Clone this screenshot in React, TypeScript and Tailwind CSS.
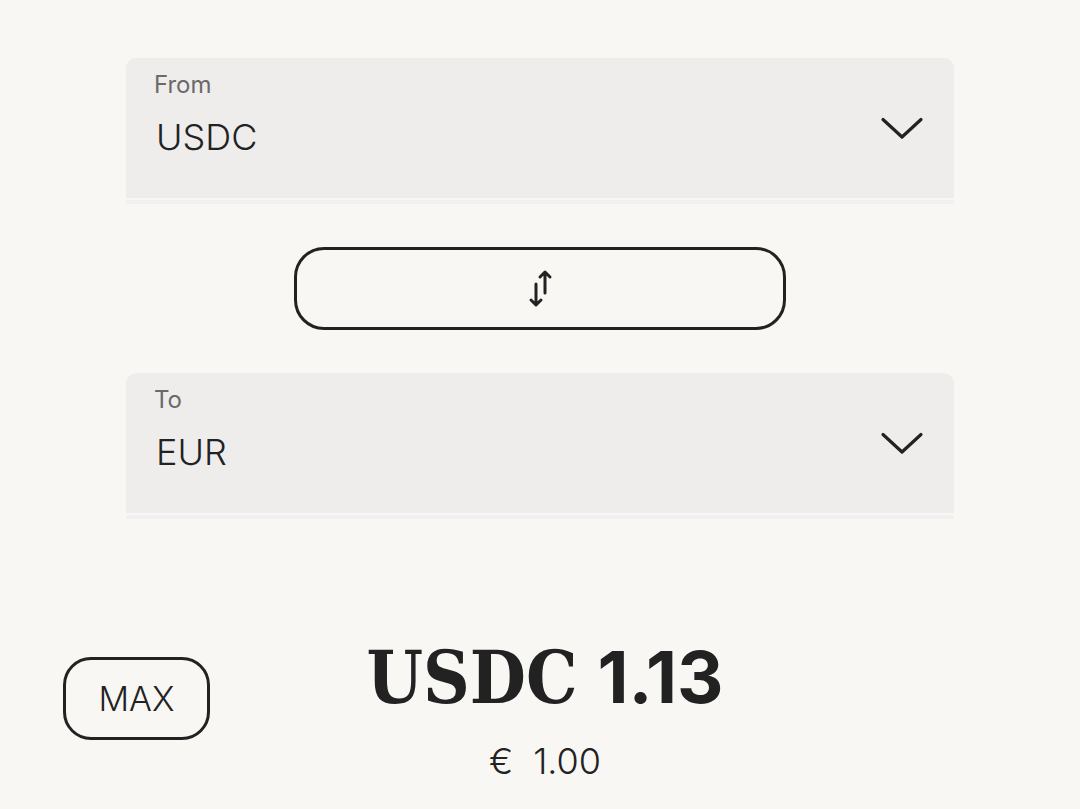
function Chevron() {
  return (
    <svg width="44" height="26" viewBox="0 0 44 26" fill="none" className="shrink-0">
      <path d="M3 4.5 L22 22 L41 4.5" stroke="#222" strokeWidth="3.2" strokeLinecap="round" strokeLinejoin="round" />
    </svg>
  );
}

function SwapIcon() {
  return (
    <svg width="26" height="42" viewBox="0 0 26 42" fill="none">
      {/* down arrow */}
      <path d="M9 16 V37 M4 32 L9 37 L14 32" stroke="#222" strokeWidth="3" strokeLinecap="round" strokeLinejoin="round" />
      {/* up arrow */}
      <path d="M18 25 V4 M13 9 L18 4 L23 9" stroke="#222" strokeWidth="3" strokeLinecap="round" strokeLinejoin="round" />
    </svg>
  );
}

function CurrencySelect({ label, value }: { label: string; value: string }) {
  return (
    <div>
      <div className="flex h-[140px] items-center justify-between rounded-t-[10px] bg-[#eeedeb] pl-[28px] pr-[30px]">
        <div className="flex flex-col self-stretch pt-[12px]">
          <span className="text-[24px] leading-[29px] text-[#6a6a6a]">{label}</span>
          <span className="mt-[16px] pl-[2px] text-[36px] font-light leading-[44px] text-[#222]">{value}</span>
        </div>
        <Chevron />
      </div>
      <div className="mt-[2px] h-[4px] bg-[#f0f0f2]" />
    </div>
  );
}

export default function App() {
  return (
    <div
      className="min-h-[809px] w-full bg-[#f8f7f4] text-[#222]"
      style={{ fontFamily: 'Inter, "Liberation Sans", sans-serif' }}
    >
      <div className="mx-auto flex w-[828px] flex-col pt-[58px]">
        <CurrencySelect label="From" value="USDC" />

        <div className="mt-[43px] flex justify-center">
          <button
            type="button"
            className="flex h-[83px] w-[492px] items-center justify-center rounded-[30px] border-[3px] border-[#222] bg-transparent"
            aria-label="Swap currencies"
          >
            <SwapIcon />
          </button>
        </div>

        <div className="mt-[43px]">
          <CurrencySelect label="To" value="EUR" />
        </div>
      </div>

      <div className="mt-[138px] flex items-start px-[63px]">
        <button
          type="button"
          className="flex h-[83px] w-[147px] shrink-0 items-center justify-center rounded-[28px] border-[3px] border-[#222] text-[34px] font-light text-[#222]"
        >
          MAX
        </button>
        <div className="-mt-[25px] flex flex-1 flex-col items-center pl-[10px]">
          <div className="flex items-baseline gap-[20px] leading-[90px]">
            <span
              className="text-[72px] font-bold"
              style={{ fontFamily: '"DejaVu Serif Condensed", "DejaVu Serif", serif', fontStretch: 'condensed' }}
            >
              USDC
            </span>
            <span className="text-[72px] font-bold">1.13</span>
          </div>
          <div className="mt-[16px] flex items-baseline gap-[20px] text-[36px] font-light leading-[44px]">
            <span>€</span>
            <span>1.00</span>
          </div>
        </div>
        <div className="w-[147px] shrink-0" />
      </div>
    </div>
  );
}
